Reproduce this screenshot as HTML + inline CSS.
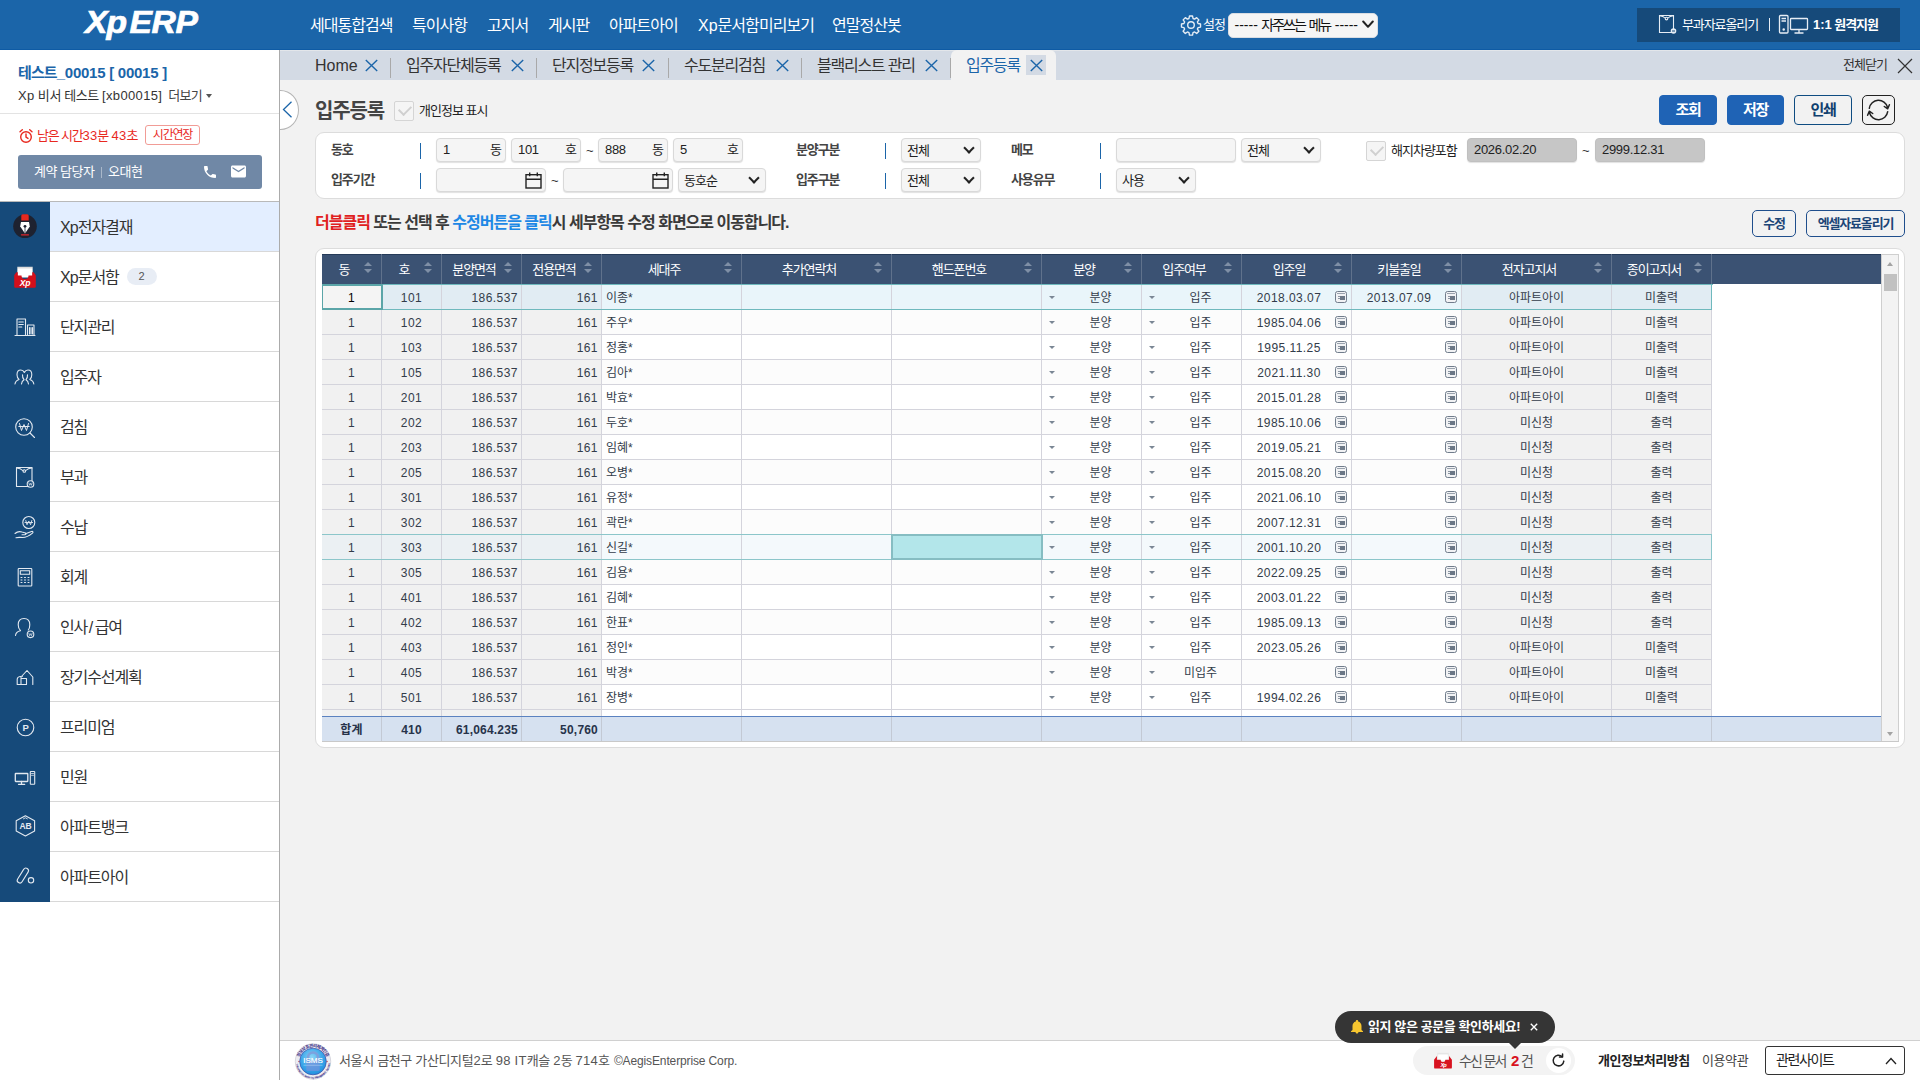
<!DOCTYPE html>
<html lang="ko">
<head>
<meta charset="utf-8">
<title>XpERP - 입주등록</title>
<style>
*{box-sizing:border-box;margin:0;padding:0}
html,body{width:1920px;height:1080px;overflow:hidden;background:#f2f2f2}
body{font-family:"Liberation Sans","Noto Sans CJK KR",sans-serif;font-size:13px;color:#222;position:relative}
.abs{position:absolute}
/* ===== header ===== */
#hdr{position:absolute;left:0;top:0;width:1920px;height:50px;background:#1b65a9;box-shadow:inset 0 -1px 0 #0e5ba5}
#logo{position:absolute;left:84.500px;top:3px;font-size:31px;font-weight:bold;font-style:italic;color:#fff;letter-spacing:-0.8px;-webkit-text-stroke:0.7px #fff;transform:scaleX(1.085);transform-origin:0 0;line-height:40px;white-space:nowrap}
#gnb a{position:absolute;top:14px;font-size:16px;color:#fff;line-height:24px;white-space:nowrap;letter-spacing:-0.95px}
#hdr .set{position:absolute;left:1203px;top:14px;color:#fff;font-size:13px;line-height:22px;letter-spacing:-1px}
#fav{position:absolute;left:1228px;top:13px;width:150px;height:25px;background:#f5f5f5;border-radius:5px;border:1px solid #d9dde3;font-size:14px;line-height:23px;padding-left:5.500px;color:#111;letter-spacing:-1.95px;word-spacing:1.500px;white-space:nowrap}
#hbox{position:absolute;left:1637px;top:8px;width:263px;height:34px;background:#164a7a}
#hbox>span{position:absolute;top:7px;color:#fff;font-size:13px;line-height:20px;white-space:nowrap;letter-spacing:-1.1px}
/* ===== sidebar ===== */
#side{position:absolute;left:0;top:50px;width:280px;height:1030px;background:#fff;border-right:1px solid #ababab}
#side .t1{position:absolute;left:18px;top:13px;font-size:15px;font-weight:bold;color:#1b65a9;line-height:20px;white-space:nowrap;letter-spacing:-0.9px}
#side .t2{position:absolute;left:18px;top:36px;font-size:13px;color:#333;line-height:20px;white-space:nowrap;letter-spacing:-0.4px}
#side .t2 .l{letter-spacing:0.35px}
#side .hr1{position:absolute;left:0;top:63px;width:279px;height:1px;background:#e3e3e3}
#side .tm{position:absolute;left:37px;top:76px;font-size:13px;color:#e8281e;line-height:20px;white-space:nowrap;letter-spacing:-1.2px}
#side .ext{position:absolute;left:145px;top:75px;width:55px;height:20px;border:1px solid #f19c96;border-radius:3px;color:#e8281e;font-size:12px;line-height:19px;text-align:center;letter-spacing:-1.2px;background:#fff}
#side .mgr{position:absolute;left:18px;top:105px;width:244px;height:34px;background:#7088a6;border-radius:3px;color:#fff;font-size:13px;line-height:34px;white-space:nowrap}
#menu{position:absolute;left:0;top:151px;width:279px}
#menu .ic{position:absolute;left:0;top:1px;width:50px;height:700px;background:#164a7a}
#menu .mi{position:absolute;left:50px;width:229px;height:50px;border-top:1px solid #d8d8d8;font-size:16px;line-height:51px;padding-left:10px;color:#333;white-space:nowrap;letter-spacing:-1.1px}
#menu .mi .l{letter-spacing:-0.9px}
#menu .mi.on{background:#e3eeff}
/* ===== tabs ===== */
#tabs{position:absolute;left:280px;top:50px;width:1640px;height:30px;background:#d3dae4;box-shadow:inset 0 1px 0 #e3e6ea}
#tabs .tb{position:absolute;top:5px;font-size:16px;line-height:22px;color:#333;white-space:nowrap;letter-spacing:-1.2px}
#tabs .sep{position:absolute;top:8px;width:1px;height:20px;background:#a9a9a9}
/* ===== footer ===== */
#ftr{position:absolute;left:280px;top:1040px;width:1640px;height:40px;background:#fff;border-top:1px solid #d0d0d0}

/* ===== main ===== */
#main{position:absolute;left:0;top:0;width:1920px;height:1040px}
#main .fold{position:absolute;left:262px;top:90px;width:37px;height:40px;border:1px solid #b5b5b5;border-radius:50%;background:#fff;clip-path:inset(0 0 0 18px)}
#main .ttl{position:absolute;left:315px;top:97px;font-size:20px;line-height:28px;font-weight:bold;color:#444;letter-spacing:-1.15px;white-space:nowrap}
.cb{position:absolute;width:20px;height:20px;background:#f5f5f5;border:1px solid #d5d5d5;border-radius:2px}
.cb:after{content:"";position:absolute;left:4px;top:3px;width:10px;height:6px;border-left:2px solid #d0d0d0;border-bottom:2px solid #d0d0d0;transform:rotate(-45deg)}
.lb13{position:absolute;font-size:13px;line-height:20px;color:#222;white-space:nowrap;letter-spacing:-1px}
.btn{position:absolute;top:95px;height:30px;border-radius:4px;font-size:15px;font-weight:bold;line-height:28px;text-align:center;letter-spacing:-1.2px}
.btn.pri{background:#1f63b5;border:1px solid #1f63b5;color:#fff}
.btn.sec{background:transparent;border:1px solid #0f4c81;color:#10406f}
.btn.ref{background:transparent;border:1px solid #222;border-radius:5px}
.btn2{position:absolute;top:210px;height:27px;border-radius:5px;background:transparent;border:1px solid #1f4e8c;color:#1c4577;font-size:13px;font-weight:bold;line-height:25px;text-align:center;letter-spacing:-1.2px}
#flt{position:absolute;left:315px;top:132px;width:1590px;height:67px;background:#fff;border:1px solid #dcdcdc;border-radius:9px}
#flt .fl{position:absolute;font-size:13px;font-weight:bold;line-height:20px;color:#444;white-space:nowrap;letter-spacing:-1.1px}
#flt .bar{position:absolute;width:1px;height:16px;background:#1b65a9}
#flt .tl{position:absolute;font-size:13px;line-height:20px;color:#333}
.inp{position:absolute;height:24px;background:#f5f5f5;border:1px solid #d9d9d9;border-radius:4px;box-shadow:0 1px 1px rgba(0,0,0,.12);font-size:13px;line-height:22px;color:#222;white-space:nowrap}
.inp .v{position:absolute;left:6px;top:0;letter-spacing:-0.3px}
.inp .u{position:absolute;right:3px;top:0}
.inp.sl .v{left:5px;top:1px;letter-spacing:-1px}
.inp.dis{background:#c6c6c6;border-color:#c0c0c0}
.inp.sl:after{content:"";position:absolute;right:7.500px;top:4.500px;width:6px;height:6px;border-right:2px solid #222;border-bottom:2px solid #222;transform:rotate(45deg)}
.note{position:absolute;left:315px;top:212px;font-size:16px;line-height:22px;font-weight:bold;color:#3a3a3a;white-space:nowrap;letter-spacing:-1.0px}
.note b{font-weight:bold}
.note .rd{color:#e02020}.note .bl{color:#1e88e5}
#gpanel{position:absolute;left:315px;top:248px;width:1590px;height:500px;background:#fff;border:1px solid #dcdcdc;border-radius:9px}
/* grid */
#grid{position:absolute;left:6px;top:5px;width:1577px;height:488px;overflow:hidden;font-size:12px;border-bottom:1px solid #c9c9c9}
#grid .gh{position:absolute;left:0;top:0;width:1559px;height:30px;background:#3b5273;display:flex;box-shadow:inset 0 1px 0 #263b59}
#grid .hc{position:relative;height:30px;border-right:1px solid #60728c;color:#fff;font-size:13px;line-height:31px;text-align:center;padding-right:15px;letter-spacing:-1.1px;flex:none}
#grid .hc.last{flex:1;border-right:0}
#grid .su,#grid .sd{position:absolute;right:9px;width:0;height:0;border-left:4px solid transparent;border-right:4px solid transparent}
#grid .su{top:8px;border-bottom:4px solid #7f8fa6}
#grid .sd{top:15px;border-top:4px solid #7f8fa6}
#grid .gb{position:absolute;left:0;top:30px;width:1559px;height:433px;overflow:hidden;background:#fff}
#grid .r{display:flex;height:25px;width:1390px;border-bottom:1px solid #d4d4dc}
#grid .c{position:relative;flex:none;height:24px;border-right:1px solid #d4d4dc;line-height:25px;padding-top:1px;color:#333c4a;white-space:nowrap;text-align:center;letter-spacing:0}
#grid .c.n{letter-spacing:0.45px}
#grid .r.alt .c{background:#fcfcfc}
#grid .c.ro,#grid .r.alt .c.ro{background:#f1f1f1}
#grid .c.rt{text-align:right;padding-right:3px}
#grid .c.lt{text-align:left;padding-left:4px}
#grid .c.dd{padding-left:18px}
#grid .c.dt{padding-right:15px}
#grid .da{position:absolute;left:7px;top:11px;width:0;height:0;border-left:3px solid transparent;border-right:3px solid transparent;border-top:3px solid #7a8694}
#grid .cal{position:absolute;right:4px;top:6px;width:12px;height:12px;border:1px solid #717d8c;border-radius:2.5px;background:linear-gradient(#6b7786,#6b7786) 4px 4px/5px 4px no-repeat,linear-gradient(#8b95a2,#8b95a2) 2px 4px/2px 1px no-repeat,linear-gradient(#8b95a2,#8b95a2) 2px 6px/2px 1px no-repeat,linear-gradient(#9aa3ae,#9aa3ae) 1px 1px/8px 1px no-repeat,#f1f2f4}
#grid .gf{position:absolute;left:0;top:462px;width:1559px;height:25px;background:#d6e1f0;border-top:1px solid #5b82c0;display:flex}
#grid .fc{flex:none;height:24px;border-right:1px solid #c3c9d4;line-height:26px;font-weight:bold;color:#27334a;letter-spacing:0.2px}
#grid .fc.ct{text-align:center}#grid .fc.rt{text-align:right;padding-right:3px}
#grid .vs{position:absolute;left:1559px;top:0;width:18px;height:487px;background:#f3f3f3;border-left:1px solid #cfcfcf;border-right:1px solid #cfcfcf;border-top:1px solid #cfcfcf}
#grid .vs .au{position:absolute;left:4.500px;top:7px;width:0;height:0;border-left:3.500px solid transparent;border-right:3.500px solid transparent;border-bottom:4px solid #a3a3a3}
#grid .vs .ad{position:absolute;left:4.500px;top:476.500px;width:0;height:0;border-left:3.500px solid transparent;border-right:3.500px solid transparent;border-top:4px solid #a3a3a3}
#grid .vs .th{position:absolute;left:2px;top:19px;width:13px;height:17px;background:#c1c1c1}

.l{letter-spacing:0}
#logo span{letter-spacing:-0.3px;margin-left:3px}
#side .more{margin-left:6px;letter-spacing:-0.7px;color:#444}
#side .crt{position:absolute;left:188px;top:8px;width:0;height:0;border-left:3.5px solid transparent;border-right:3.5px solid transparent;border-top:4px solid #555}
#menu .bdg{display:inline-block;vertical-align:middle;margin-left:8px;margin-top:-4px;width:30px;height:17px;border-radius:9px;background:#e8edf5;color:#555;font-size:11px;font-weight:normal;line-height:17px;text-align:center;letter-spacing:0}

#tabs .act{position:absolute;left:671px;top:0;width:105px;height:30px;background:#f2f2f2;border-radius:6px 6px 0 0}
#tabs .actx{position:absolute;left:746px;top:5px;width:20px;height:20px;background:#d3dae4}
#tabs .tx{position:absolute;top:9px;fill:none;stroke:#1b65a9;stroke-width:1.4}

#grid .r.sel .c{background:#e9f5fa}
#grid .r.sel .c.ro{background:#e1ecf3}
#grid .gb:before{content:"";display:block;height:1px;width:1391px;background:#6fb9bd}
#grid .r.sel{border-bottom-color:#6fb9bd}
#grid .r.sel .c:last-child{border-right-color:#6fb9bd}
#grid .r.hov .c:last-child{border-right-color:#8cc6ca}
#grid .r.sel .c.foc{background:#f4f4f4;color:#000;outline:2px solid #5ba5a8;outline-offset:-1px;z-index:2}
#grid .r.hov .c{background:#f4f9fc}
#grid .r.hov .c.ro{background:#ebf0f3}
#grid .r.hov{box-shadow:0 -1px 0 #8cc6ca;border-bottom-color:#8cc6ca}
#grid .r.hov .c.hl{background:#b3e6ea;outline:2px solid #86bdc2;outline-offset:-1px;z-index:2}
#grid .r{position:relative}

#ftr .addr{position:absolute;left:59px;top:9px;font-size:13px;line-height:22px;color:#555;white-space:nowrap;letter-spacing:-0.34px}
#ftr .addr .l{letter-spacing:0.25px}
#ftr .rcv{position:absolute;left:1133px;top:5px;width:162px;height:29px;border-radius:15px;background:#f3f3f3;font-size:14px;line-height:22px;letter-spacing:-1.5px;white-space:nowrap}
#ftr .rbt{position:absolute;left:133px;top:2px;width:25px;height:25px;border-radius:50%;background:#fff}
#ftr .flk{position:absolute;top:9px;font-size:13px;line-height:22px;color:#444;white-space:nowrap;letter-spacing:-1px}
#ftr .fsel{position:absolute;left:1485px;top:5px;width:140px;height:29px;border:1px solid #333;border-radius:3px;background:#fff;font-size:14px;line-height:27px;color:#222;letter-spacing:-1.4px}
#ftr .fsel span{position:absolute;left:10px;top:0}
#toast{position:absolute;left:1335px;top:1011px;width:220px;height:32px;border-radius:16px;background:#353535;color:#fff;font-size:13px;font-weight:bold;line-height:22px;white-space:nowrap;letter-spacing:-0.4px}
#toast .ptr{position:absolute;left:173px;top:31px;width:0;height:0;border-left:7px solid transparent;border-right:7px solid transparent;border-top:7px solid #353535}
</style>
</head>
<body>
<div id="hdr">
  <div id="logo">Xp<span>ERP</span></div>
  <div id="gnb">
    <a style="left:310px">세대통합검색</a>
    <a style="left:412px">특이사항</a>
    <a style="left:487px">고지서</a>
    <a style="left:548px">게시판</a>
    <a style="left:609px">아파트아이</a>
    <a style="left:698px"><span class="l">Xp</span>문서함미리보기</a>
    <a style="left:832px">연말정산봇</a>
  </div>
  <svg class="abs" style="left:1180px;top:14px" width="22" height="22" viewBox="0 0 24 24" fill="none" stroke="#e6edf5" stroke-width="1.5" stroke-linejoin="round"><circle cx="12" cy="12" r="3.6"/><path d="M10.3 2.2h3.4l.5 2.7 1.7.7 2.3-1.6 2.4 2.4-1.6 2.3.7 1.7 2.7.5v3.4l-2.7.5-.7 1.7 1.6 2.3-2.4 2.4-2.3-1.6-1.7.7-.5 2.7h-3.4l-.5-2.7-1.7-.7-2.3 1.6-2.4-2.4 1.6-2.3-.7-1.7-2.7-.5v-3.4l2.7-.5.7-1.7-1.6-2.3 2.4-2.4 2.3 1.6 1.7-.7z"/></svg>
  <div class="set">설정</div>
  <div id="fav"><span class="l">-----</span> 자주쓰는 메뉴 <span class="l" style="margin-left:1px">-----</span><svg class="abs" style="left:133px;top:6px" width="12" height="9" viewBox="0 0 12 9" fill="none" stroke="#222" stroke-width="2" stroke-linecap="round" stroke-linejoin="round"><path d="M1.2 1.5L6 6.8l4.8-5.3"/></svg></div>
  <div id="hbox">
    <svg class="abs" style="left:21px;top:6px" width="20" height="21" viewBox="0 0 20 21" fill="none" stroke="#e6edf5" stroke-width="1.1"><path d="M1.5 1.5h14v17h-14z"/><path d="M1.5 1.8c3 .2 4.5 1 5.6 2.2M15.5 1.8c-3 .2-4.500 1-5.600 2.200"/><circle cx="8.5" cy="4.600" r="1.300"/><circle cx="15.500" cy="17" r="2.800" fill="#e6edf5" stroke="none"/><path d="M14 17h3" stroke="#164a7a" stroke-width="1"/></svg>
    <span style="left:45px">부과자료올리기</span>
    <i style="position:absolute;left:132px;top:10px;width:1px;height:13px;background:#e6edf5"></i>
    <svg class="abs" style="left:141px;top:6px" width="32" height="21" viewBox="0 0 32 21" fill="none" stroke="#e6edf5" stroke-width="1.300"><rect x="1.500" y="1.500" width="8.500" height="17.500" rx="1"/><path d="M3.500 4.500h4.500M3.500 7h4.500"/><circle cx="5.700" cy="15.500" r=".6" fill="#e6edf5"/><rect x="12.500" y="4.500" width="17" height="11" rx=".8"/><path d="M21 15.500v3M16.500 19h9"/></svg>
    <span style="left:176px;font-weight:bold"><span class="l">1:1</span> 원격지원</span>
  </div>
</div>

<div id="side">
  <div class="t1">테스트<span style="letter-spacing:-0.25px">_00015 [ 00015 ]</span></div>
  <div class="t2"><span class="l">Xp</span> 비서 테스트 <span class="l">[xb00015]</span><span class="more">더보기</span><i class="crt"></i></div>
  <div class="hr1"></div>
  <svg class="abs" style="left:18px;top:78px" width="16" height="16" viewBox="0 0 16 16" fill="none" stroke="#e8281e" stroke-width="1.400" stroke-linecap="round"><circle cx="8" cy="9" r="5.300"/><path d="M8 6v3.200l2 1.200M2 3.800L4.300 1.800M14 3.800L11.700 1.800"/></svg>
  <div class="tm">남은 시간<span style="letter-spacing:.2px">33</span>분 <span style="letter-spacing:.2px;margin-left:1px">43</span>초</div>
  <div class="ext">시간연장</div>
  <div class="mgr"><span style="position:absolute;left:16px;letter-spacing:-0.5px">계약 담당자</span><i style="position:absolute;left:83px;top:12px;width:1px;height:11px;background:#a9b7c9"></i><span style="position:absolute;left:90px;letter-spacing:-0.5px">오대현</span>
    <svg class="abs" style="left:184px;top:9px" width="16" height="16" viewBox="0 0 24 24" fill="#fff"><path d="M6.600 10.800c1.400 2.800 3.800 5.100 6.600 6.600l2.200-2.200c.3-.3.700-.4 1-.2 1.100.4 2.300.6 3.600.6.600 0 1 .4 1 1V20c0 .6-.4 1-1 1C10.600 21 3 13.400 3 4c0-.6.400-1 1-1h3.500c.6 0 1 .4 1 1 0 1.300.2 2.500.6 3.600.1.300 0 .7-.2 1z"/></svg>
    <svg class="abs" style="left:213px;top:10px" width="15" height="13" viewBox="0 0 20 16" fill="#fff"><path d="M18 0H2C.9 0 0 .9 0 2v12c0 1.100.9 2 2 2h16c1.100 0 2-.9 2-2V2c0-1.100-.9-2-2-2zm0 4l-8 5-8-5V2l8 5 8-5z"/></svg>
  </div>
  <div id="menu">
    <div class="ic"></div><i style="position:absolute;left:0;top:0;width:279px;height:1px;background:#b9b9b9;z-index:3"></i>
    <div class="mi on" style="top:0"><span class="l">Xp</span>전자결재</div>
    <div class="mi" style="top:50px"><span class="l">Xp</span>문서함<b class="bdg">2</b></div>
    <div class="mi" style="top:100px">단지관리</div>
    <div class="mi" style="top:150px">입주자</div>
    <div class="mi" style="top:200px">검침</div>
    <div class="mi" style="top:250px">부과</div>
    <div class="mi" style="top:300px">수납</div>
    <div class="mi" style="top:350px">회계</div>
    <div class="mi" style="top:400px">인사<span style="letter-spacing:1.5px;margin-left:1.5px">/</span>급여</div>
    <div class="mi" style="top:450px">장기수선계획</div>
    <div class="mi" style="top:500px">프리미엄</div>
    <div class="mi" style="top:550px">민원</div>
    <div class="mi" style="top:600px">아파트뱅크</div>
    <div class="mi" style="top:650px">아파트아이</div>
    <div class="mi" style="top:700px;height:1px"></div>
    <svg class="abs" style="left:0;top:0" width="50" height="700" viewBox="0 0 50 700" fill="none" stroke="#e3e9f0" stroke-width="1.1" stroke-linecap="round" stroke-linejoin="round">
      <!-- 1 pen -->
      <circle cx="25" cy="25.300" r="11.800" fill="#1e2230" stroke="none"/>
      <path d="M21.300 19.500v-4.700q0-1.500 1.500-1.500h4.400q1.500 0 1.500 1.500v4.700z" fill="#e8281e" stroke="none"/>
      <path d="M21 21h8l.8 4.500L25 32.500 20.200 25.500z" fill="#fff" stroke="none"/>
      <circle cx="25" cy="25.300" r="1.400" fill="#1e2230" stroke="none"/>
      <path d="M25 26.500v5" stroke="#1e2230" stroke-width=".8"/>
      <path d="M21.500 33.800h7" stroke="#e0242b" stroke-width="1.200"/>
      <!-- 2 inbox -->
      <path d="M17.300 65.800h15.400v10h-15.400z" fill="#dcdcdc" stroke="none"/>
      <path d="M17.800 67.600h14.400v9h-14.400z" fill="#fff" stroke="none"/>
      <path d="M14.200 74.300L16.300 71.200h1.500v3.300h3.700a3.500 3.500 0 0 0 7 0h3.700v-3.300h1.500l2.100 3.100V85.700q0 1.100-1.100 1.100H15.300q-1.100 0-1.100-1.100z" fill="#d30f1b" stroke="none"/>
      <text x="25" y="84.800" font-family="Liberation Sans, sans-serif" font-size="8.600" font-weight="bold" font-style="italic" fill="#fff" stroke="none" text-anchor="middle" letter-spacing="-.3">Xp</text>
      <!-- 3 building -->
      <path d="M15 134.500h20M17 134.500v-16.500h8.500v16.500M27.500 134.500v-10.500h6.500v10.500M18.800 121h4.500M18.800 123.500h4.500M18.800 126h3M29.500 126.500v6.500M31 126.500v6.500M32.500 126.500v6.500"/>
      <!-- 4 people -->
      <path d="M15 183c.3-2.500 1.500-3.800 4-4.600-1.400-1.200-2-2.800-2-4.700 0-2.800 1.500-4.700 3.800-4.700 1.700 0 2.900 1 3.500 2.500M24.500 171.300c.6-1.400 1.800-2.300 3.500-2.300 2.300 0 3.800 1.900 3.800 4.700 0 1.900-.6 3.500-2 4.700 2.500.8 3.700 2.100 4 4.600M21.500 183c.2-2 1-3.300 2.600-4.200-1.200-1.300-1.800-2.900-1.600-5.100M27.500 173.700c.2 2.200-.4 3.800-1.600 5.100 1.600.9 2.400 2.200 2.600 4.200"/>
      <!-- 5 magnifier won -->
      <circle cx="24" cy="226" r="8.300"/><path d="M30 232l4.500 4.500"/>
      <path d="M19.500 222.500l2 7 2.500-6 2.500 6 2-7M18.800 225.500h10.400" stroke-width="1"/>
      <!-- 6 doc won -->
      <path d="M16.500 266.500h15.500v19h-15.500z"/><path d="M16.500 267c3.500.2 5 1.200 6.200 2.500M32 267c-3.500.2-5 1.200-6.200 2.500"/><circle cx="24.300" cy="270" r="1.300"/>
      <circle cx="30.500" cy="283" r="3.300" fill="#164a7a"/><path d="M28.800 281.800l.8 2.500.9-2 .9 2 .8-2.500" stroke-width=".7"/>
      <!-- 7 hand coin -->
      <circle cx="28.800" cy="321.500" r="6"/><path d="M25.800 319.500l1.200 4.200 1.800-3.600 1.800 3.600 1.200-4.200M25 321.500h7.600" stroke-width=".9"/>
      <path d="M15 332.500c2-1.800 4.500-2.300 7-1.500l3.500 1c1 .4.800 1.700-.5 1.700h-3M25.500 332.800l6-2.300c1.300-.4 2 .8 1 1.700-3 2.500-6.500 4.300-10 4.300-2.500 0-4-.5-6.500.3"/>
      <!-- 8 calculator -->
      <rect x="18.200" y="367.500" width="13.600" height="17.500" rx=".8"/><rect x="20.300" y="369.800" width="9.400" height="3.400"/>
      <path d="M21 376.500h1M24.500 376.500h1M28 376.500h1M21 379h1M24.500 379h1M28 379h1M21 381.500h1M24.500 381.500h1M28 381.500h1" stroke-width="1"/>
      <!-- 9 person won -->
      <path d="M15.500 434.500c.3-2.800 2-4.200 5-4.800-1.600-1.500-2.300-3.500-2.300-6 0-3.800 2.300-6.200 5.800-6.200s5.800 2.400 5.800 6.200c0 2.300-.5 4-1.500 5.300"/>
      <circle cx="30.500" cy="433.300" r="3.300"/><path d="M28.800 432.200l.8 2.500.9-2 .9 2 .8-2.500" stroke-width=".7"/>
      <!-- 10 house -->
      <path d="M17.200 483.500v-5.200c0-3 5.300-3 5.300-3M21 483.500v-7.500l6-6.500 5.800 6.500v7.500M21 477.500h5.500v6h-9.300"/>
      <!-- 11 premium -->
      <circle cx="25.500" cy="526.500" r="8.300"/>
      <text x="25.600" y="530" font-family="Liberation Sans, sans-serif" font-size="9.500" font-weight="bold" fill="#e3e9f0" stroke="none" text-anchor="middle">P</text>
      <!-- 12 monitor tower -->
      <rect x="15.300" y="572.500" width="12.500" height="8" rx=".5" stroke-width="1.300"/><path d="M21.500 580.500v2.500M18.500 583.300h6.200" stroke-width="1.300"/>
      <rect x="30.300" y="570.500" width="4.400" height="12.800" rx=".5"/><path d="M31.500 572.500h2M31.500 574.300h2" stroke-width=".8"/>
      <!-- 13 hexagon AB -->
      <path d="M25.400 614.700l9.200 5v10.300l-9.200 5-9.200-5v-10.300z"/>
      <path d="M23.500 617.800l1.900-1 1.900 1" stroke-width=".9"/>
      <text x="25.400" y="628.300" font-family="Liberation Sans, sans-serif" font-size="8.500" font-weight="bold" fill="#e3e9f0" stroke="none" text-anchor="middle" letter-spacing="-.3">AB</text>
      <!-- 14 aptI -->
      <rect x="20.300" y="666.300" width="5.200" height="16.500" rx="2.600" transform="rotate(32 22.900 674.500)"/>
      <circle cx="31" cy="679.300" r="2.700"/>
    </svg>
  </div>
</div>

<div id="tabs">
  <div class="act"></div><div class="actx"></div>
  <div class="tb" style="left:35px"><span class="l">Home</span></div><svg class="tx" style="left:85.0px" width="13" height="13" viewBox="0 0 13 13"><path d="M.8 1l11.400 11M12.200 1L.8 12"/></svg>
  <div class="sep" style="left:110px"></div>
  <div class="tb" style="left:126px">입주자단체등록</div><svg class="tx" style="left:230.5px" width="13" height="13" viewBox="0 0 13 13"><path d="M.8 1l11.400 11M12.200 1L.8 12"/></svg>
  <div class="sep" style="left:256px"></div>
  <div class="tb" style="left:272px">단지정보등록</div><svg class="tx" style="left:362.0px" width="13" height="13" viewBox="0 0 13 13"><path d="M.8 1l11.400 11M12.200 1L.8 12"/></svg>
  <div class="sep" style="left:388px"></div>
  <div class="tb" style="left:404px">수도분리검침</div><svg class="tx" style="left:495.5px" width="13" height="13" viewBox="0 0 13 13"><path d="M.8 1l11.400 11M12.200 1L.8 12"/></svg>
  <div class="sep" style="left:521px"></div>
  <div class="tb" style="left:537px">블랙리스트 관리</div><svg class="tx" style="left:644.5px" width="13" height="13" viewBox="0 0 13 13"><path d="M.8 1l11.400 11M12.200 1L.8 12"/></svg>
  <div class="sep" style="left:670px"></div>
  <div class="tb" style="left:686px;color:#1b65a9">입주등록</div><svg class="tx" style="left:749.5px" width="13" height="13" viewBox="0 0 13 13"><path d="M.8 1l11.400 11M12.200 1L.8 12"/></svg>
  <div class="tb" style="left:1563px;font-size:13px;letter-spacing:-1px;top:4px">전체닫기</div>
  <svg class="abs" style="left:1617px;top:8px" width="16" height="16" viewBox="0 0 16 16" fill="none" stroke="#333" stroke-width="1.2"><path d="M1 1l14 14M15 1L1 15"/></svg>
</div>

<div id="main">
  <div class="fold"></div><svg class="abs" style="left:282px;top:101px" width="11" height="17" viewBox="0 0 11 17" fill="none" stroke="#1b65a9" stroke-width="1.3"><path d="M9.500 .8L1.500 8.500l8 7.700"/></svg>
  <div class="ttl">입주등록</div>
  <div class="cb" style="left:394px;top:101px"></div>
  <div class="lb13" style="left:419px;top:101px">개인정보 표시</div>
  <div class="btn pri" style="left:1659px;width:58px">조회</div>
  <div class="btn pri" style="left:1727px;width:57px">저장</div>
  <div class="btn sec" style="left:1794px;width:58px">인쇄</div>
  <div class="btn ref" style="left:1862px;width:33px"><svg class="abs" style="left:-1px;top:-1px" width="33" height="30" viewBox="0 0 33 30" fill="none" stroke="#222" stroke-width="1.500" stroke-linecap="round" stroke-linejoin="round"><path d="M7.300 13.300A9.300 9.300 0 0 1 25.500 12.300M22.300 11.500l3.400 2.300 1.700-4"/><path d="M25.700 16.700A9.300 9.300 0 0 1 7.500 17.700M10.700 18.500l-3.400-2.300-1.700 4"/></svg></div>

  <div id="flt">
    <div class="fl" style="left:15px;top:7px">동호</div><i class="bar" style="left:104px;top:10px"></i>
    <div class="inp" style="left:120px;top:5px;width:70px"><span class="v">1</span><span class="u">동</span></div>
    <div class="inp" style="left:195px;top:5px;width:70px"><span class="v">101</span><span class="u">호</span></div>
    <div class="tl" style="left:270px;top:8px">~</div>
    <div class="inp" style="left:282px;top:5px;width:70px"><span class="v">888</span><span class="u">동</span></div>
    <div class="inp" style="left:357px;top:5px;width:70px"><span class="v">5</span><span class="u">호</span></div>
    <div class="fl" style="left:480px;top:7px">분양구분</div><i class="bar" style="left:569px;top:10px"></i>
    <div class="inp sl" style="left:585px;top:5px;width:80px"><span class="v">전체</span></div>
    <div class="fl" style="left:695px;top:7px">메모</div><i class="bar" style="left:784px;top:10px"></i>
    <div class="inp" style="left:800px;top:5px;width:120px"></div>
    <div class="inp sl" style="left:925px;top:5px;width:80px"><span class="v">전체</span></div>
    <div class="cb" style="left:1050px;top:8px"></div>
    <div class="lb13" style="left:1075px;top:8px">해지차량포함</div>
    <div class="inp dis" style="left:1151px;top:5px;width:110px"><span class="v">2026.02.20</span></div>
    <div class="tl" style="left:1266px;top:8px">~</div>
    <div class="inp dis" style="left:1279px;top:5px;width:110px"><span class="v">2999.12.31</span></div>

    <div class="fl" style="left:15px;top:37px">입주기간</div><i class="bar" style="left:104px;top:40px"></i>
    <div class="inp" style="left:120px;top:35px;width:110px"><svg class="abs" style="left:88px;top:3px" width="17" height="17" viewBox="0 0 17 17" fill="none" stroke="#222" stroke-width="1.400"><rect x="1" y="2.700" width="15" height="13.300"/><path d="M1 7.300h15M4.700 .5v3.700M12.300 .5v3.700"/></svg></div>
    <div class="tl" style="left:235px;top:38px">~</div>
    <div class="inp" style="left:247px;top:35px;width:110px"><svg class="abs" style="left:88px;top:3px" width="17" height="17" viewBox="0 0 17 17" fill="none" stroke="#222" stroke-width="1.400"><rect x="1" y="2.700" width="15" height="13.300"/><path d="M1 7.300h15M4.700 .5v3.700M12.300 .5v3.700"/></svg></div>
    <div class="inp sl" style="left:362px;top:35px;width:88px"><span class="v">동호순</span></div>
    <div class="fl" style="left:480px;top:37px">입주구분</div><i class="bar" style="left:569px;top:40px"></i>
    <div class="inp sl" style="left:585px;top:35px;width:80px"><span class="v">전체</span></div>
    <div class="fl" style="left:695px;top:37px">사용유무</div><i class="bar" style="left:784px;top:40px"></i>
    <div class="inp sl" style="left:800px;top:35px;width:80px"><span class="v">사용</span></div>
  </div>

  <div class="note"><b class="rd">더블클릭</b> 또는 선택 후 <b class="bl">수정버튼을 클릭</b>시 세부항목 수정 화면으로 이동합니다.</div>
  <div class="btn2" style="left:1752px;width:44px">수정</div>
  <div class="btn2" style="left:1806px;width:99px">엑셀자료올리기</div>

  <div id="gpanel">
<div id="grid">
<div class="gh">
<div class="hc" style="width:60px"><span>동</span><i class="su"></i><i class="sd"></i></div>
<div class="hc" style="width:60px"><span>호</span><i class="su"></i><i class="sd"></i></div>
<div class="hc" style="width:80px"><span>분양면적</span><i class="su"></i><i class="sd"></i></div>
<div class="hc" style="width:80px"><span>전용면적</span><i class="su"></i><i class="sd"></i></div>
<div class="hc" style="width:140px"><span>세대주</span><i class="su"></i><i class="sd"></i></div>
<div class="hc" style="width:150px"><span>추가연락처</span><i class="su"></i><i class="sd"></i></div>
<div class="hc" style="width:150px"><span>핸드폰번호</span><i class="su"></i><i class="sd"></i></div>
<div class="hc" style="width:100px"><span>분양</span><i class="su"></i><i class="sd"></i></div>
<div class="hc" style="width:100px"><span>입주여부</span><i class="su"></i><i class="sd"></i></div>
<div class="hc" style="width:110px"><span>입주일</span><i class="su"></i><i class="sd"></i></div>
<div class="hc" style="width:110px"><span>키불출일</span><i class="su"></i><i class="sd"></i></div>
<div class="hc" style="width:150px"><span>전자고지서</span><i class="su"></i><i class="sd"></i></div>
<div class="hc" style="width:100px"><span>종이고지서</span><i class="su"></i><i class="sd"></i></div>
<div class="hc last"></div>
</div>
<div class="gb">
<div class="r sel">
<div class="c ro ct n foc" style="width:60px">1</div>
<div class="c ro ct n" style="width:60px">101</div>
<div class="c ro rt n" style="width:80px">186.537</div>
<div class="c ro rt n" style="width:80px">161</div>
<div class="c lt" style="width:140px">이종*</div>
<div class="c" style="width:150px"></div>
<div class="c" style="width:150px"></div>
<div class="c dd" style="width:100px"><i class="da"></i>분양</div>
<div class="c dd" style="width:100px"><i class="da"></i>입주</div>
<div class="c dt n" style="width:110px">2018.03.07<i class="cal"></i></div>
<div class="c dt n" style="width:110px">2013.07.09<i class="cal"></i></div>
<div class="c ro ct" style="width:150px">아파트아이</div>
<div class="c ro ct" style="width:100px">미출력</div>
</div>
<div class="r alt">
<div class="c ro ct n" style="width:60px">1</div>
<div class="c ro ct n" style="width:60px">102</div>
<div class="c ro rt n" style="width:80px">186.537</div>
<div class="c ro rt n" style="width:80px">161</div>
<div class="c lt" style="width:140px">주우*</div>
<div class="c" style="width:150px"></div>
<div class="c" style="width:150px"></div>
<div class="c dd" style="width:100px"><i class="da"></i>분양</div>
<div class="c dd" style="width:100px"><i class="da"></i>입주</div>
<div class="c dt n" style="width:110px">1985.04.06<i class="cal"></i></div>
<div class="c dt n" style="width:110px"><i class="cal"></i></div>
<div class="c ro ct" style="width:150px">아파트아이</div>
<div class="c ro ct" style="width:100px">미출력</div>
</div>
<div class="r">
<div class="c ro ct n" style="width:60px">1</div>
<div class="c ro ct n" style="width:60px">103</div>
<div class="c ro rt n" style="width:80px">186.537</div>
<div class="c ro rt n" style="width:80px">161</div>
<div class="c lt" style="width:140px">정홍*</div>
<div class="c" style="width:150px"></div>
<div class="c" style="width:150px"></div>
<div class="c dd" style="width:100px"><i class="da"></i>분양</div>
<div class="c dd" style="width:100px"><i class="da"></i>입주</div>
<div class="c dt n" style="width:110px">1995.11.25<i class="cal"></i></div>
<div class="c dt n" style="width:110px"><i class="cal"></i></div>
<div class="c ro ct" style="width:150px">아파트아이</div>
<div class="c ro ct" style="width:100px">미출력</div>
</div>
<div class="r alt">
<div class="c ro ct n" style="width:60px">1</div>
<div class="c ro ct n" style="width:60px">105</div>
<div class="c ro rt n" style="width:80px">186.537</div>
<div class="c ro rt n" style="width:80px">161</div>
<div class="c lt" style="width:140px">김아*</div>
<div class="c" style="width:150px"></div>
<div class="c" style="width:150px"></div>
<div class="c dd" style="width:100px"><i class="da"></i>분양</div>
<div class="c dd" style="width:100px"><i class="da"></i>입주</div>
<div class="c dt n" style="width:110px">2021.11.30<i class="cal"></i></div>
<div class="c dt n" style="width:110px"><i class="cal"></i></div>
<div class="c ro ct" style="width:150px">아파트아이</div>
<div class="c ro ct" style="width:100px">미출력</div>
</div>
<div class="r">
<div class="c ro ct n" style="width:60px">1</div>
<div class="c ro ct n" style="width:60px">201</div>
<div class="c ro rt n" style="width:80px">186.537</div>
<div class="c ro rt n" style="width:80px">161</div>
<div class="c lt" style="width:140px">박효*</div>
<div class="c" style="width:150px"></div>
<div class="c" style="width:150px"></div>
<div class="c dd" style="width:100px"><i class="da"></i>분양</div>
<div class="c dd" style="width:100px"><i class="da"></i>입주</div>
<div class="c dt n" style="width:110px">2015.01.28<i class="cal"></i></div>
<div class="c dt n" style="width:110px"><i class="cal"></i></div>
<div class="c ro ct" style="width:150px">아파트아이</div>
<div class="c ro ct" style="width:100px">미출력</div>
</div>
<div class="r alt">
<div class="c ro ct n" style="width:60px">1</div>
<div class="c ro ct n" style="width:60px">202</div>
<div class="c ro rt n" style="width:80px">186.537</div>
<div class="c ro rt n" style="width:80px">161</div>
<div class="c lt" style="width:140px">두호*</div>
<div class="c" style="width:150px"></div>
<div class="c" style="width:150px"></div>
<div class="c dd" style="width:100px"><i class="da"></i>분양</div>
<div class="c dd" style="width:100px"><i class="da"></i>입주</div>
<div class="c dt n" style="width:110px">1985.10.06<i class="cal"></i></div>
<div class="c dt n" style="width:110px"><i class="cal"></i></div>
<div class="c ro ct" style="width:150px">미신청</div>
<div class="c ro ct" style="width:100px">출력</div>
</div>
<div class="r">
<div class="c ro ct n" style="width:60px">1</div>
<div class="c ro ct n" style="width:60px">203</div>
<div class="c ro rt n" style="width:80px">186.537</div>
<div class="c ro rt n" style="width:80px">161</div>
<div class="c lt" style="width:140px">임혜*</div>
<div class="c" style="width:150px"></div>
<div class="c" style="width:150px"></div>
<div class="c dd" style="width:100px"><i class="da"></i>분양</div>
<div class="c dd" style="width:100px"><i class="da"></i>입주</div>
<div class="c dt n" style="width:110px">2019.05.21<i class="cal"></i></div>
<div class="c dt n" style="width:110px"><i class="cal"></i></div>
<div class="c ro ct" style="width:150px">미신청</div>
<div class="c ro ct" style="width:100px">출력</div>
</div>
<div class="r alt">
<div class="c ro ct n" style="width:60px">1</div>
<div class="c ro ct n" style="width:60px">205</div>
<div class="c ro rt n" style="width:80px">186.537</div>
<div class="c ro rt n" style="width:80px">161</div>
<div class="c lt" style="width:140px">오병*</div>
<div class="c" style="width:150px"></div>
<div class="c" style="width:150px"></div>
<div class="c dd" style="width:100px"><i class="da"></i>분양</div>
<div class="c dd" style="width:100px"><i class="da"></i>입주</div>
<div class="c dt n" style="width:110px">2015.08.20<i class="cal"></i></div>
<div class="c dt n" style="width:110px"><i class="cal"></i></div>
<div class="c ro ct" style="width:150px">미신청</div>
<div class="c ro ct" style="width:100px">출력</div>
</div>
<div class="r">
<div class="c ro ct n" style="width:60px">1</div>
<div class="c ro ct n" style="width:60px">301</div>
<div class="c ro rt n" style="width:80px">186.537</div>
<div class="c ro rt n" style="width:80px">161</div>
<div class="c lt" style="width:140px">유정*</div>
<div class="c" style="width:150px"></div>
<div class="c" style="width:150px"></div>
<div class="c dd" style="width:100px"><i class="da"></i>분양</div>
<div class="c dd" style="width:100px"><i class="da"></i>입주</div>
<div class="c dt n" style="width:110px">2021.06.10<i class="cal"></i></div>
<div class="c dt n" style="width:110px"><i class="cal"></i></div>
<div class="c ro ct" style="width:150px">미신청</div>
<div class="c ro ct" style="width:100px">출력</div>
</div>
<div class="r alt">
<div class="c ro ct n" style="width:60px">1</div>
<div class="c ro ct n" style="width:60px">302</div>
<div class="c ro rt n" style="width:80px">186.537</div>
<div class="c ro rt n" style="width:80px">161</div>
<div class="c lt" style="width:140px">곽란*</div>
<div class="c" style="width:150px"></div>
<div class="c" style="width:150px"></div>
<div class="c dd" style="width:100px"><i class="da"></i>분양</div>
<div class="c dd" style="width:100px"><i class="da"></i>입주</div>
<div class="c dt n" style="width:110px">2007.12.31<i class="cal"></i></div>
<div class="c dt n" style="width:110px"><i class="cal"></i></div>
<div class="c ro ct" style="width:150px">미신청</div>
<div class="c ro ct" style="width:100px">출력</div>
</div>
<div class="r hov">
<div class="c ro ct n" style="width:60px">1</div>
<div class="c ro ct n" style="width:60px">303</div>
<div class="c ro rt n" style="width:80px">186.537</div>
<div class="c ro rt n" style="width:80px">161</div>
<div class="c lt" style="width:140px">신길*</div>
<div class="c" style="width:150px"></div>
<div class="c hl" style="width:150px"></div>
<div class="c dd" style="width:100px"><i class="da"></i>분양</div>
<div class="c dd" style="width:100px"><i class="da"></i>입주</div>
<div class="c dt n" style="width:110px">2001.10.20<i class="cal"></i></div>
<div class="c dt n" style="width:110px"><i class="cal"></i></div>
<div class="c ro ct" style="width:150px">미신청</div>
<div class="c ro ct" style="width:100px">출력</div>
</div>
<div class="r alt">
<div class="c ro ct n" style="width:60px">1</div>
<div class="c ro ct n" style="width:60px">305</div>
<div class="c ro rt n" style="width:80px">186.537</div>
<div class="c ro rt n" style="width:80px">161</div>
<div class="c lt" style="width:140px">김용*</div>
<div class="c" style="width:150px"></div>
<div class="c" style="width:150px"></div>
<div class="c dd" style="width:100px"><i class="da"></i>분양</div>
<div class="c dd" style="width:100px"><i class="da"></i>입주</div>
<div class="c dt n" style="width:110px">2022.09.25<i class="cal"></i></div>
<div class="c dt n" style="width:110px"><i class="cal"></i></div>
<div class="c ro ct" style="width:150px">미신청</div>
<div class="c ro ct" style="width:100px">출력</div>
</div>
<div class="r">
<div class="c ro ct n" style="width:60px">1</div>
<div class="c ro ct n" style="width:60px">401</div>
<div class="c ro rt n" style="width:80px">186.537</div>
<div class="c ro rt n" style="width:80px">161</div>
<div class="c lt" style="width:140px">김혜*</div>
<div class="c" style="width:150px"></div>
<div class="c" style="width:150px"></div>
<div class="c dd" style="width:100px"><i class="da"></i>분양</div>
<div class="c dd" style="width:100px"><i class="da"></i>입주</div>
<div class="c dt n" style="width:110px">2003.01.22<i class="cal"></i></div>
<div class="c dt n" style="width:110px"><i class="cal"></i></div>
<div class="c ro ct" style="width:150px">미신청</div>
<div class="c ro ct" style="width:100px">출력</div>
</div>
<div class="r alt">
<div class="c ro ct n" style="width:60px">1</div>
<div class="c ro ct n" style="width:60px">402</div>
<div class="c ro rt n" style="width:80px">186.537</div>
<div class="c ro rt n" style="width:80px">161</div>
<div class="c lt" style="width:140px">한표*</div>
<div class="c" style="width:150px"></div>
<div class="c" style="width:150px"></div>
<div class="c dd" style="width:100px"><i class="da"></i>분양</div>
<div class="c dd" style="width:100px"><i class="da"></i>입주</div>
<div class="c dt n" style="width:110px">1985.09.13<i class="cal"></i></div>
<div class="c dt n" style="width:110px"><i class="cal"></i></div>
<div class="c ro ct" style="width:150px">미신청</div>
<div class="c ro ct" style="width:100px">출력</div>
</div>
<div class="r">
<div class="c ro ct n" style="width:60px">1</div>
<div class="c ro ct n" style="width:60px">403</div>
<div class="c ro rt n" style="width:80px">186.537</div>
<div class="c ro rt n" style="width:80px">161</div>
<div class="c lt" style="width:140px">정인*</div>
<div class="c" style="width:150px"></div>
<div class="c" style="width:150px"></div>
<div class="c dd" style="width:100px"><i class="da"></i>분양</div>
<div class="c dd" style="width:100px"><i class="da"></i>입주</div>
<div class="c dt n" style="width:110px">2023.05.26<i class="cal"></i></div>
<div class="c dt n" style="width:110px"><i class="cal"></i></div>
<div class="c ro ct" style="width:150px">아파트아이</div>
<div class="c ro ct" style="width:100px">미출력</div>
</div>
<div class="r alt">
<div class="c ro ct n" style="width:60px">1</div>
<div class="c ro ct n" style="width:60px">405</div>
<div class="c ro rt n" style="width:80px">186.537</div>
<div class="c ro rt n" style="width:80px">161</div>
<div class="c lt" style="width:140px">박경*</div>
<div class="c" style="width:150px"></div>
<div class="c" style="width:150px"></div>
<div class="c dd" style="width:100px"><i class="da"></i>분양</div>
<div class="c dd" style="width:100px"><i class="da"></i>미입주</div>
<div class="c dt n" style="width:110px"><i class="cal"></i></div>
<div class="c dt n" style="width:110px"><i class="cal"></i></div>
<div class="c ro ct" style="width:150px">아파트아이</div>
<div class="c ro ct" style="width:100px">미출력</div>
</div>
<div class="r">
<div class="c ro ct n" style="width:60px">1</div>
<div class="c ro ct n" style="width:60px">501</div>
<div class="c ro rt n" style="width:80px">186.537</div>
<div class="c ro rt n" style="width:80px">161</div>
<div class="c lt" style="width:140px">장병*</div>
<div class="c" style="width:150px"></div>
<div class="c" style="width:150px"></div>
<div class="c dd" style="width:100px"><i class="da"></i>분양</div>
<div class="c dd" style="width:100px"><i class="da"></i>입주</div>
<div class="c dt n" style="width:110px">1994.02.26<i class="cal"></i></div>
<div class="c dt n" style="width:110px"><i class="cal"></i></div>
<div class="c ro ct" style="width:150px">아파트아이</div>
<div class="c ro ct" style="width:100px">미출력</div>
</div>
<div class="r">
<div class="c ro" style="width:60px"></div>
<div class="c ro" style="width:60px"></div>
<div class="c ro" style="width:80px"></div>
<div class="c ro" style="width:80px"></div>
<div class="c" style="width:140px"></div>
<div class="c" style="width:150px"></div>
<div class="c" style="width:150px"></div>
<div class="c" style="width:100px"></div>
<div class="c" style="width:100px"></div>
<div class="c" style="width:110px"></div>
<div class="c" style="width:110px"></div>
<div class="c ro" style="width:150px"></div>
<div class="c ro" style="width:100px"></div>
</div>
</div>
<div class="gf">
<div class="fc ct" style="width:60px">합계</div>
<div class="fc ct" style="width:60px">410</div>
<div class="fc rt" style="width:80px">61,064.235</div>
<div class="fc rt" style="width:80px">50,760</div>
<div class="fc ct" style="width:140px"></div>
<div class="fc ct" style="width:150px"></div>
<div class="fc ct" style="width:150px"></div>
<div class="fc ct" style="width:100px"></div>
<div class="fc ct" style="width:100px"></div>
<div class="fc ct" style="width:110px"></div>
<div class="fc ct" style="width:110px"></div>
<div class="fc ct" style="width:150px"></div>
<div class="fc ct" style="width:100px"></div>
</div>
<div class="vs"><i class="au"></i><b class="th"></b><i class="ad"></i></div>
</div>
  </div>
</div>


<div id="ftr">
  <svg class="abs" style="left:14px;top:1px" width="38" height="38" viewBox="0 0 38 38">
    <defs>
      <radialGradient id="ig" cx="45%" cy="35%" r="70%"><stop offset="0" stop-color="#8fd6f7"/><stop offset=".55" stop-color="#3fa9ea"/><stop offset="1" stop-color="#1c8bdc"/></radialGradient>
    </defs>
    <circle cx="19" cy="19.500" r="17.700" fill="#ececf1" stroke="#cfcfd8" stroke-width=".8"/>
    <g font-family="Liberation Sans, Noto Sans CJK KR, sans-serif" font-size="4.5" font-weight="bold" fill="#3a2c85" text-anchor="middle"><text x="19" y="5.40" transform="rotate(-64.0 19 19.5)">정</text><text x="19" y="5.40" transform="rotate(-49.8 19 19.5)">보</text><text x="19" y="5.40" transform="rotate(-35.6 19 19.5)">보</text><text x="19" y="5.40" transform="rotate(-21.3 19 19.5)">호</text><text x="19" y="5.40" transform="rotate(-7.1 19 19.5)">관</text><text x="19" y="5.40" transform="rotate(7.1 19 19.5)">리</text><text x="19" y="5.40" transform="rotate(21.3 19 19.5)">체</text><text x="19" y="5.40" transform="rotate(35.6 19 19.5)">계</text><text x="19" y="5.40" transform="rotate(49.8 19 19.5)">인</text><text x="19" y="5.40" transform="rotate(64.0 19 19.5)">증</text></g>
    <g font-family="Liberation Sans, sans-serif" font-size="2.9" font-weight="bold" fill="#3a2c85" text-anchor="middle"><text x="19" y="36.70" transform="rotate(80.0 19 19.5)">I</text><text x="19" y="36.70" transform="rotate(75.7 19 19.5)">n</text><text x="19" y="36.70" transform="rotate(71.4 19 19.5)">f</text><text x="19" y="36.70" transform="rotate(67.0 19 19.5)">o</text><text x="19" y="36.70" transform="rotate(62.7 19 19.5)">r</text><text x="19" y="36.70" transform="rotate(58.4 19 19.5)">m</text><text x="19" y="36.70" transform="rotate(54.1 19 19.5)">a</text><text x="19" y="36.70" transform="rotate(49.7 19 19.5)">t</text><text x="19" y="36.70" transform="rotate(45.4 19 19.5)">i</text><text x="19" y="36.70" transform="rotate(41.1 19 19.5)">o</text><text x="19" y="36.70" transform="rotate(36.8 19 19.5)">n</text><text x="19" y="36.70" transform="rotate(28.1 19 19.5)">S</text><text x="19" y="36.70" transform="rotate(23.8 19 19.5)">e</text><text x="19" y="36.70" transform="rotate(19.5 19 19.5)">c</text><text x="19" y="36.70" transform="rotate(15.1 19 19.5)">u</text><text x="19" y="36.70" transform="rotate(10.8 19 19.5)">r</text><text x="19" y="36.70" transform="rotate(6.5 19 19.5)">i</text><text x="19" y="36.70" transform="rotate(2.2 19 19.5)">t</text><text x="19" y="36.70" transform="rotate(-2.2 19 19.5)">y</text><text x="19" y="36.70" transform="rotate(-10.8 19 19.5)">M</text><text x="19" y="36.70" transform="rotate(-15.1 19 19.5)">a</text><text x="19" y="36.70" transform="rotate(-19.5 19 19.5)">n</text><text x="19" y="36.70" transform="rotate(-23.8 19 19.5)">a</text><text x="19" y="36.70" transform="rotate(-28.1 19 19.5)">g</text><text x="19" y="36.70" transform="rotate(-32.4 19 19.5)">e</text><text x="19" y="36.70" transform="rotate(-36.8 19 19.5)">m</text><text x="19" y="36.70" transform="rotate(-41.1 19 19.5)">e</text><text x="19" y="36.70" transform="rotate(-45.4 19 19.5)">n</text><text x="19" y="36.70" transform="rotate(-49.7 19 19.5)">t</text><text x="19" y="36.70" transform="rotate(-58.4 19 19.5)">S</text><text x="19" y="36.70" transform="rotate(-62.7 19 19.5)">y</text><text x="19" y="36.70" transform="rotate(-67.0 19 19.5)">s</text><text x="19" y="36.70" transform="rotate(-71.4 19 19.5)">t</text><text x="19" y="36.70" transform="rotate(-75.7 19 19.5)">e</text><text x="19" y="36.70" transform="rotate(-80.0 19 19.5)">m</text></g>
    <circle cx="5" cy="19.500" r=".7" fill="#c8323c"/><circle cx="33" cy="19.500" r=".7" fill="#c8323c"/>
    <circle cx="19" cy="19.500" r="13.300" fill="url(#ig)" stroke="#3d4fa8" stroke-width=".7"/>
    <path d="M14 19v-3.500a5 5 0 0 1 10 0V19" fill="none" stroke="#7f9fdc" stroke-width="2.600" opacity=".9"/>
    <rect x="12.300" y="18.500" width="13.400" height="10.500" rx="1.300" fill="#6f93dc" opacity=".75"/>
    <text x="19" y="21.300" font-family="Liberation Sans, sans-serif" font-size="6.600" font-weight="normal" fill="#fff" stroke="#fff" stroke-width=".15" text-anchor="middle" textLength="19.500" lengthAdjust="spacingAndGlyphs">ISMS</text>
    <path d="M9.500 23.300h19" stroke="#dff1fd" stroke-width=".35"/>
  </svg>
  <div class="addr">서울시 금천구 가산디지털<span class="l">2</span>로 <span class="l">98 IT</span>캐슬 <span class="l">2</span>동 <span class="l">714</span>호 <span style="font-size:12px;letter-spacing:-0.13px;margin-left:1px">©AegisEnterprise Corp.</span></div>
  <div class="rcv">
    <svg class="abs" style="left:21px;top:6px" width="18" height="17" viewBox="0 0 22 21"><path d="M4 1h14v8H4z" fill="#e6e6e6"/><path d="M5 3h12v7H5z" fill="#fff"/><path d="M0 9.500L3.500 5v4.500H8q0 3 3 3t3-3h4.500V5L22 9.500V19q0 1.500-1.500 1.500h-19Q0 20.500 0 19z" fill="#d8121f"/><text x="11" y="18.500" font-family="Liberation Sans, sans-serif" font-size="7" font-weight="bold" font-style="italic" fill="#fff" text-anchor="middle">Xp</text></svg>
    <span class="abs" style="left:46px;top:4px;color:#555;letter-spacing:-1.9px;word-spacing:0.500px">수신 문서</span>
    <span class="abs" style="left:98px;top:4px;color:#d8121f;font-weight:bold;font-size:15px;letter-spacing:0">2</span>
    <span class="abs" style="left:108px;top:4px;color:#555">건</span>
    <div class="rbt"><svg class="abs" style="left:5px;top:5px" width="15" height="15" viewBox="0 0 24 24" fill="none" stroke="#222" stroke-width="2.400" stroke-linecap="round" stroke-linejoin="round"><path d="M20.500 13A8.500 8.500 0 1 1 17.800 5.800"/><path d="M18.500 1.500v5h-5"/></svg></div>
  </div>
  <div class="flk" style="left:1318px;font-weight:bold;color:#222;letter-spacing:-0.5px">개인정보처리방침</div>
  <div class="flk" style="left:1422px;letter-spacing:-0.4px">이용약관</div>
  <div class="fsel"><span>관련사이트</span><svg class="abs" style="left:119px;top:10px" width="12" height="8" viewBox="0 0 12 8" fill="none" stroke="#222" stroke-width="1.300"><path d="M1 7l5-5.500L11 7"/></svg></div>
</div>
<div id="toast">
  <svg class="abs" style="left:16px;top:9px" width="12" height="14" viewBox="0 0 24 28" fill="#f7c62f"><path d="M12 27c1.700 0 3-1.300 3-3H9c0 1.700 1.300 3 3 3zm9-7v-8c0-4.500-2.400-8.200-6.800-9.200V2c0-1.200-1-2-2.200-2s-2.200.8-2.200 2v.8C5.400 3.800 3 7.500 3 12v8l-3 2.500V24h24v-1.500z"/></svg>
  <span class="abs" style="left:33px;top:5px">읽지 않은 공문을 확인하세요!</span>
  <svg class="abs" style="left:195px;top:12px" width="8" height="8" viewBox="0 0 10 10" fill="none" stroke="#fff" stroke-width="1.700"><path d="M1 1l8 8M9 1L1 9"/></svg>
  <i class="ptr"></i>
</div>

</body>
</html>
